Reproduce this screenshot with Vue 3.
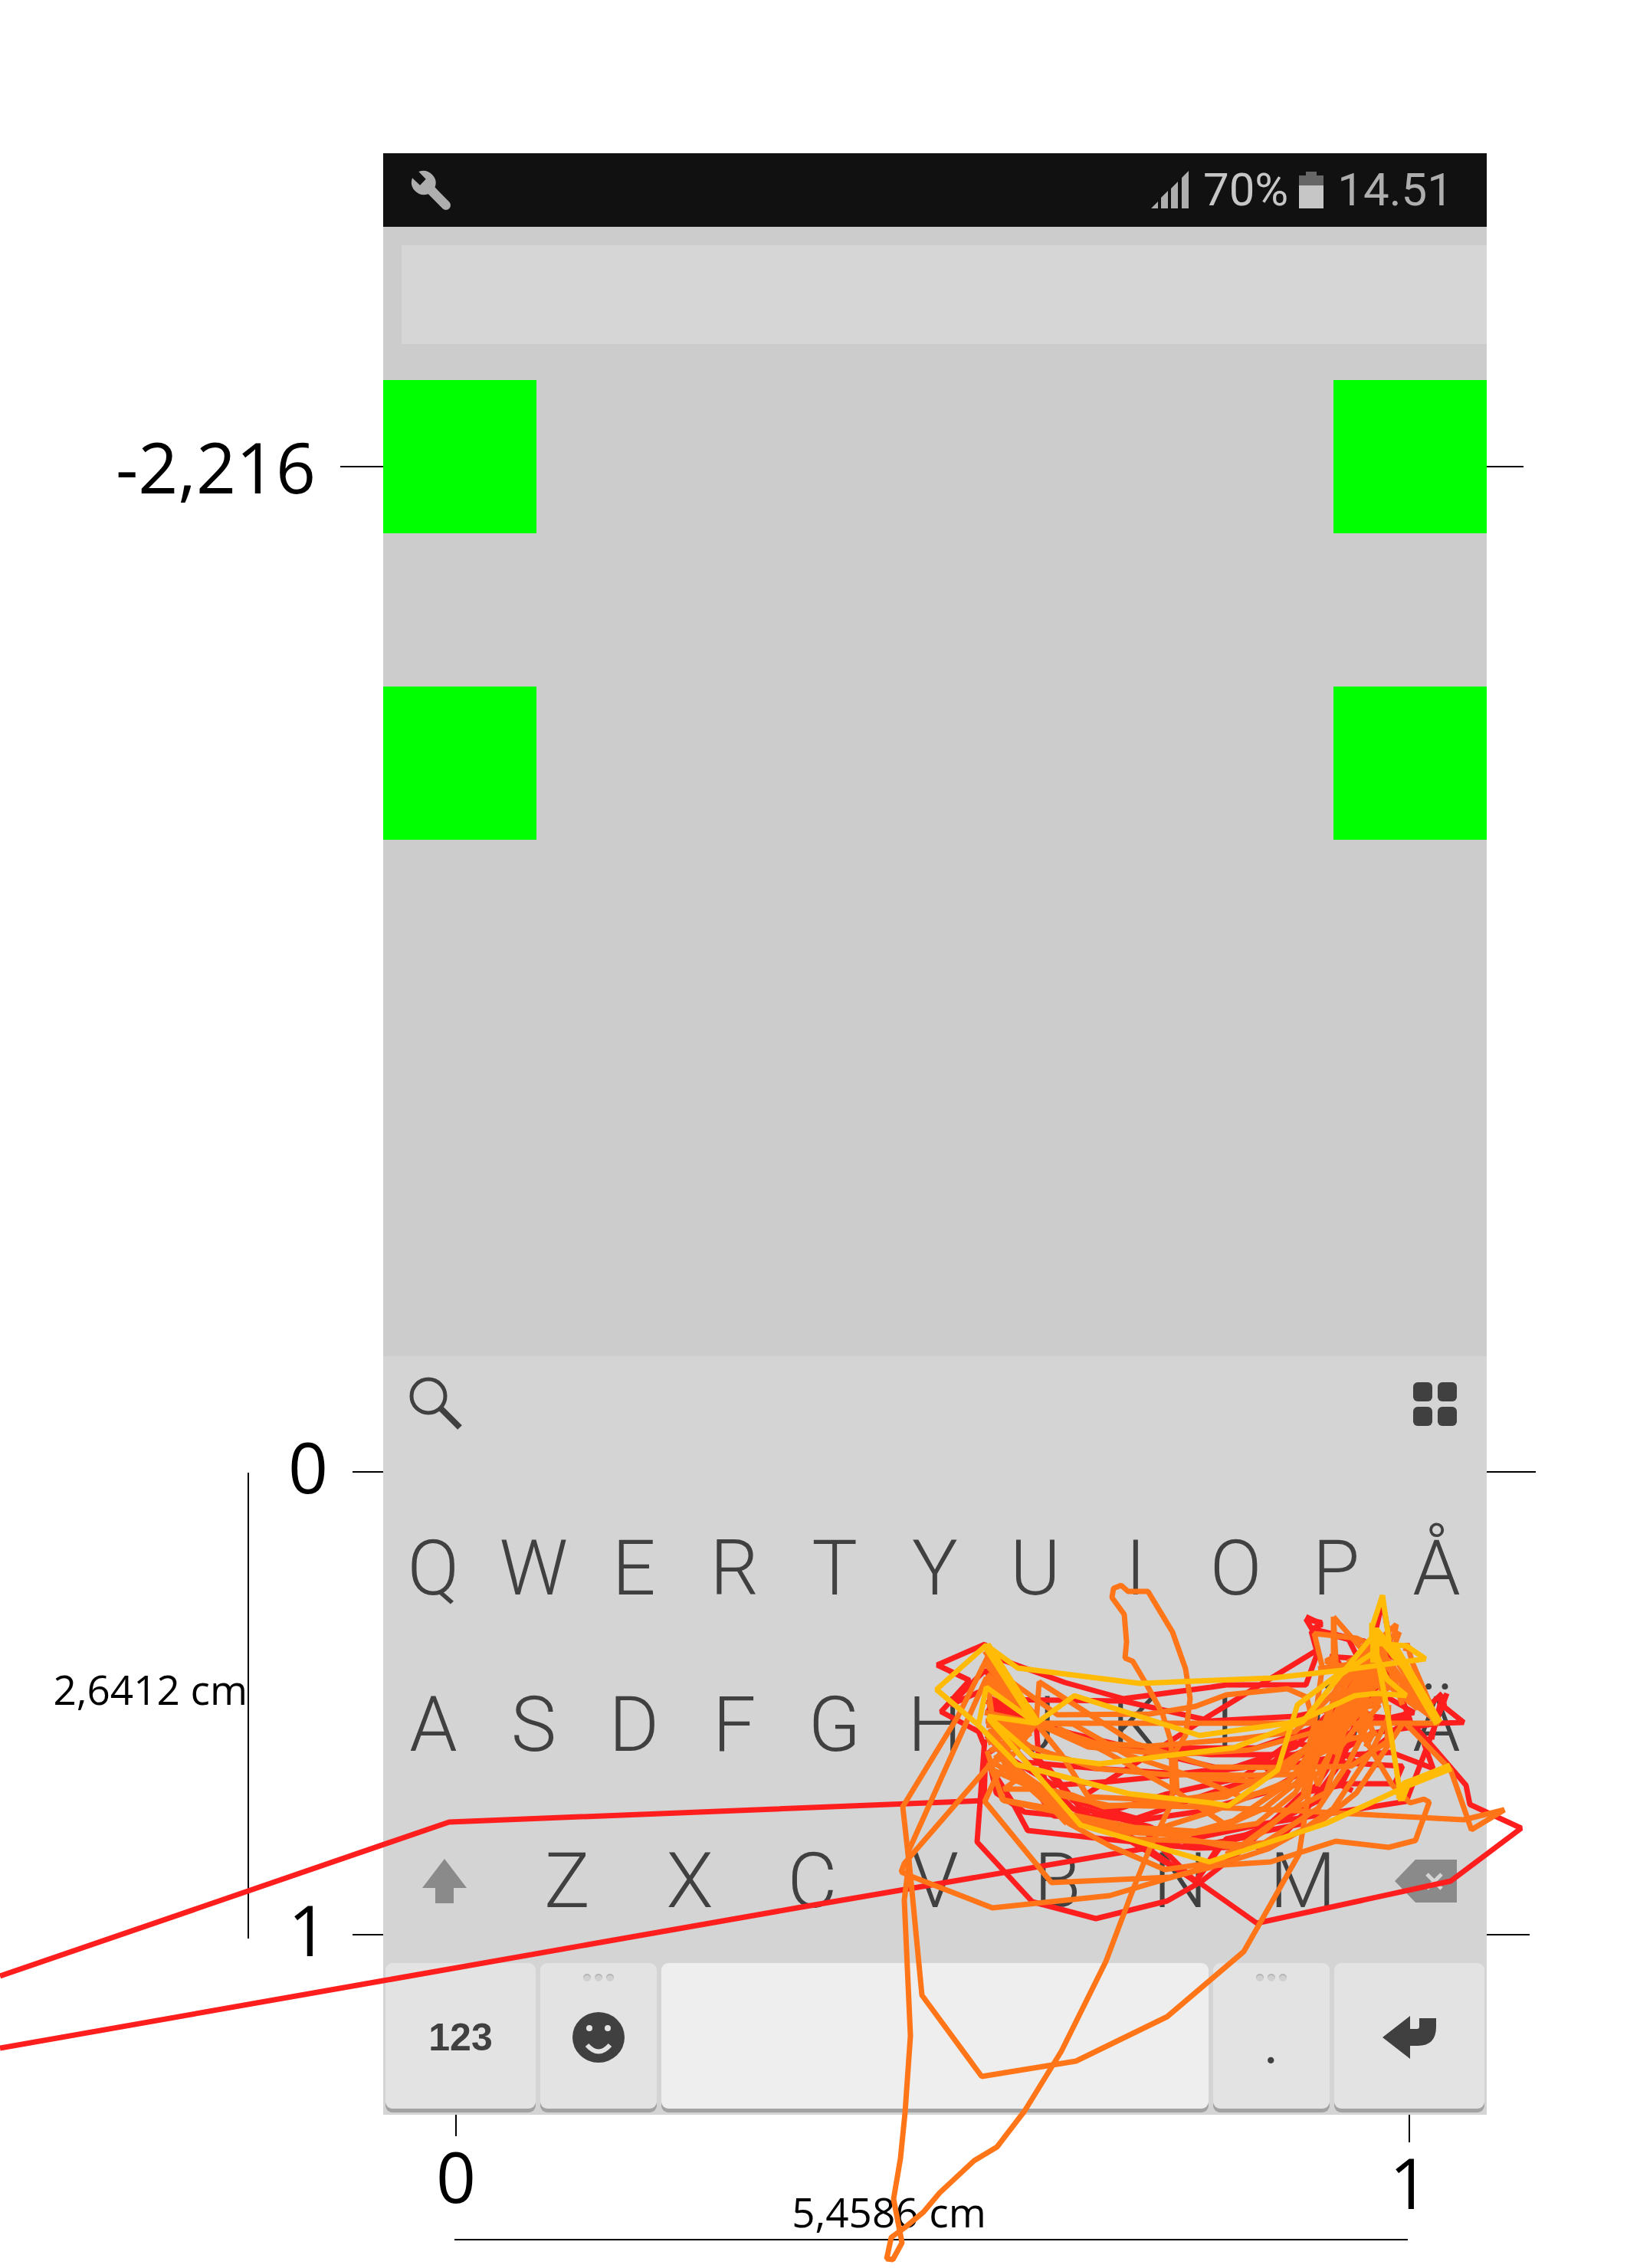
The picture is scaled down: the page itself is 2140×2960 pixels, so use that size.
<script setup>
const topRow = ['Q', 'W', 'E', 'R', 'T', 'Y', 'U', 'I', 'O', 'P', 'Å']
const homeRow = ['A', 'S', 'D', 'F', 'G', 'H', 'J', 'K', 'L', 'Ö', 'Ä']
const lowerRow = ['Z', 'X', 'C', 'V', 'B', 'N', 'M']

// Finger paths, one polyline each, in screen coordinates.
const redTraces = [
  '0,2579 586,2378 1284,2350 1286,2290 1352,2249',
  '0,2673 500,2585 1040,2490 1497,2412 1650,2380 1835,2351 1862,2280 1888,2210',
  '1352,2249 1285,2146 1223,2173 1265,2193 1228,2234 1277,2260 1285,2280',
  '1285,2270 1275,2404 1347,2482 1430,2504 1523,2481 1567,2456 1620,2415 1700,2340 1760,2328 1820,2328 1830,2305 1740,2300',
  '1352,2249 1355,2290 1364,2325 1400,2360 1470,2400 1565,2457 1640,2510 1893,2455 1985,2386 1918,2355 1913,2330 1870,2280 1830,2235',
  '1290,2160 1390,2196 1466,2217 1580,2202 1600,2199 1704,2199 1720,2155 1713,2128 1704,2113 1725,2118',
  '1352,2249 1300,2218 1466,2220 1580,2246 1690,2240 1790,2220 1810,2150',
  '1285,2205 1240,2225 1285,2180 1352,2249 1440,2275 1580,2290 1690,2290 1760,2260',
  '1287,2220 1352,2249 1400,2263 1480,2282 1640,2281 1730,2250 1780,2180 1760,2140 1714,2127',
  '1287,2265 1340,2320 1375,2370 1480,2374 1580,2340 1700,2300 1764,2290 1815,2287 1870,2308 1858,2275',
  '1288,2300 1320,2350 1341,2389 1440,2400 1560,2412 1660,2410 1700,2368 1750,2300 1790,2200',
  '1290,2240 1370,2310 1410,2360 1500,2384 1560,2410 1640,2395 1718,2330 1770,2250 1800,2180',
  '1288,2230 1352,2295 1400,2350 1490,2375 1560,2365 1650,2340 1730,2296 1790,2262 1877,2249',
  '1420,2340 1500,2290 1577,2240 1718,2154 1711,2129 1780,2142 1830,2170 1866,2225 1882,2210',
  '1288,2285 1300,2340 1337,2365 1420,2373 1520,2342 1620,2320 1700,2262 1765,2225 1800,2200',
  '1352,2249 1430,2275 1520,2291 1600,2310 1690,2280 1740,2230 1760,2190 1740,2160',
  '1290,2245 1340,2300 1430,2308 1540,2315 1660,2300 1733,2275 1770,2300 1815,2265 1835,2240',
  '1310,2290 1375,2330 1450,2325 1580,2312 1680,2300 1720,2280 1690,2275 1650,2310',
  '1400,2360 1480,2400 1560,2456 1590,2410 1660,2380 1720,2350 1760,2310 1750,2330 1765,2337',
  '1480,2376 1560,2456 1600,2400 1700,2380',
  '1290,2215 1352,2249 1288,2228 1352,2249 1289,2238 1340,2245',
  '1735,2162 1778,2165 1810,2215 1845,2235 1800,2245 1750,2252',
  '1704,2110 1725,2120 1712,2126 1780,2142 1825,2205 1840,2245 1790,2240 1750,2215 1770,2190',
  '1790,2150 1804,2090 1816,2155 1877,2249 1910,2248 1885,2228 1882,2212 1868,2270',
]

const orangeTraces = [
  '1352,2249 1290,2160 1250,2240 1178,2358 1186,2430 1180,2480 1188,2657 1181,2757 1175,2817 1166,2870 1177,2927 1165,2949 1157,2948 1163,2920 1181,2907 1205,2887 1226,2862 1271,2820 1301,2802 1337,2755 1385,2677 1443,2560 1480,2462 1500,2413 1527,2357 1530,2340 1528,2273 1517,2237 1497,2200 1478,2168 1468,2164 1470,2143 1467,2107 1451,2085 1453,2073 1463,2069 1472,2077 1498,2077 1530,2130 1547,2178 1553,2217 1547,2265 1533,2287 1536,2340',
  '1352,2249 1287,2190 1185,2417 1188,2447 1203,2604 1281,2710 1404,2690 1523,2632 1623,2547 1695,2420 1707,2343 1717,2280 1735,2230 1790,2150',
  '1352,2249 1290,2305 1180,2432 1176,2443 1187,2448 1295,2490 1448,2474 1580,2435 1658,2430 1743,2403 1812,2411 1847,2402 1865,2352 1858,2348 1840,2353 1817,2330 1775,2260 1790,2140',
  '1352,2249 1298,2323 1285,2351 1372,2457 1527,2450 1580,2437 1655,2413 1700,2388 1740,2360 1790,2285 1812,2240 1790,2160',
  '1835,2250 1893,2310 1920,2388 1963,2362 1910,2375 1760,2367 1687,2363 1560,2358 1445,2356 1370,2340 1300,2290',
  '1287,2165 1352,2249 1877,2249 1843,2170 1836,2145 1834,2155',
  '1352,2249 1356,2195 1410,2230 1480,2275 1580,2306 1680,2307 1763,2305 1810,2273 1812,2225',
  '1352,2249 1285,2170 1380,2238 1500,2237 1560,2227 1600,2212 1680,2204 1705,2215 1720,2275 1700,2340',
  '1290,2205 1352,2249 1430,2275 1500,2279 1620,2269 1690,2260 1740,2210 1797,2130 1877,2249',
  '1290,2260 1352,2249 1400,2250 1470,2290 1560,2320 1620,2345 1690,2330 1740,2250 1780,2180',
  '1285,2235 1352,2249 1420,2280 1530,2290 1630,2284 1710,2262 1760,2230 1800,2170',
  '1287,2270 1352,2249 1385,2290 1420,2345 1530,2350 1600,2340 1680,2310 1740,2240 1795,2150',
  '1290,2300 1310,2350 1380,2365 1480,2385 1560,2390 1610,2376 1680,2328 1730,2260 1790,2200',
  '1288,2285 1308,2349 1370,2360 1450,2390 1540,2395 1640,2380 1690,2340 1735,2265 1780,2230',
  '1290,2220 1310,2300 1350,2330 1400,2378 1500,2390 1600,2410 1650,2405 1720,2360 1760,2300 1790,2240',
  '1288,2190 1300,2280 1345,2335 1395,2380 1450,2410 1520,2440 1590,2430 1680,2365 1730,2340 1750,2280',
  '1290,2265 1330,2310 1390,2375 1480,2400 1560,2403 1650,2410 1720,2380 1770,2340 1830,2250',
  '1290,2240 1345,2280 1430,2308 1520,2316 1640,2317 1720,2315 1740,2280 1775,2230 1815,2200',
  '1295,2310 1340,2330 1400,2343 1440,2358 1520,2352 1600,2345 1690,2295 1755,2235 1805,2180',
  '1380,2255 1440,2285 1530,2335 1600,2382 1650,2360 1700,2320 1740,2260 1770,2200',
  '1500,2390 1580,2365 1680,2325 1730,2280 1770,2240 1797,2190',
  '1560,2320 1640,2325 1700,2285 1760,2225 1790,2180',
  '1600,2420 1650,2390 1700,2345 1720,2290 1745,2200 1740,2110 1740,2163 1730,2168 1797,2200',
  '1285,2155 1352,2249 1287,2170 1352,2249 1288,2185 1352,2249 1288,2195 1352,2240 1290,2165 1345,2238 1292,2175 1340,2236 1290,2190',
  '1286,2246 1352,2249 1287,2252 1352,2249 1288,2262 1352,2249 1289,2275 1352,2249 1292,2285 1345,2262 1298,2295',
  '1290,2270 1320,2290 1295,2300 1330,2320 1310,2335 1350,2335 1325,2310 1400,2370 1340,2325 1392,2380',
  '1726,2178 1715,2132 1770,2138 1795,2150 1877,2249 1797,2130 1830,2225',
  '1740,2110 1775,2150 1800,2140 1822,2120 1818,2140 1826,2130 1815,2160',
  '1797,2130 1877,2249 1800,2165 1877,2249 1800,2180 1870,2243 1805,2190 1860,2235 1812,2200 1850,2230 1810,2165 1840,2205',
  '1720,2178 1776,2170 1800,2190 1760,2240 1740,2270 1760,2180 1790,2170 1700,2300 1760,2270 1797,2262',
  '1725,2180 1715,2250 1705,2290 1720,2330 1750,2250 1795,2200 1780,2150',
  '1733,2165 1750,2176 1800,2170 1770,2200 1792,2262 1782,2280',
  '1758,2170 1790,2150 1765,2180 1800,2160 1775,2190 1805,2175 1790,2205 1810,2190 1795,2225 1812,2210',
  '1735,2250 1720,2270 1745,2262 1730,2285 1755,2258 1742,2290 1780,2240 1765,2230 1800,2225 1770,2260',
]

const yellowTraces = [
  '1352,2249 1287,2147 1222,2205 1275,2250 1327,2303 1473,2341 1580,2353 1603,2357 1667,2310 1693,2225 1757,2177 1790,2137 1790,2118',
  '1287,2147 1328,2177 1487,2197 1560,2194 1660,2190 1750,2180 1860,2165 1835,2148 1800,2145',
  '1277,2250 1287,2202 1352,2249 1402,2213 1565,2265 1680,2249 1700,2244 1768,2213 1797,2210 1835,2213 1810,2192 1792,2150',
  '1352,2249 1289,2240 1348,2291 1435,2302 1610,2281 1700,2247 1750,2185 1795,2155',
  '1290,2243 1410,2382 1578,2430 1730,2380 1823,2337 1828,2350 1832,2327 1893,2306 1826,2334 1808,2220 1795,2150',
  '1790,2125 1804,2082 1813,2145 1877,2249',
]

const yellowBold = [
  '1287,2147 1352,2249',
  '1794,2124 1794,2170',
  '1794,2128 1834,2175 1877,2249 1818,2148',
  '1893,2306 1835,2329 1827,2349',
]
</script>

<template>
  <main class="figure">
    <aside class="gutter gutter-left">
      <div class="tick-row first">
        <span class="axis-label">-2,216</span><i class="tick long"></i>
      </div>
      <div class="tick-row second">
        <span class="axis-label">0</span><i class="tick"></i>
      </div>
      <div class="tick-row third">
        <span class="axis-label">1</span><i class="tick"></i>
      </div>
      <div class="height-measure">2,6412 cm</div>
    </aside>

    <section class="phone">
      <header class="status">
        <svg class="wrench" width="52" height="52" viewBox="0 0 52 52">
          <path fill="#aeaeae" d="M10.3 2 A16.3 16.3 0 0 1 31.6 22.6 L50.2 41.6 A6 6 0 0 1 41.6 50.2 L22.8 31.2 A16.3 16.3 0 0 1 2 10.2 L12 19.7 L19.7 11.7 Z" />
        </svg>
        <span class="spacer"></span>
        <svg class="signal" width="50" height="50" viewBox="0 0 50 50">
          <path fill="#aeaeae" d="M0 49 L9 40 V49Z M13 49 V35 L22 26 V49Z M26 49 V23 L35 14 V49Z M40 49 V9 L49 0 V49Z" />
        </svg>
        <span class="percent">70%</span>
        <svg class="battery" width="32" height="48" viewBox="0 0 32 48">
          <path fill="#666" d="M0 5 H9 V0 H23 V5 H32 V18 H0Z" />
          <path fill="#c6c6c6" d="M0 18 H32 V48 H0Z" />
        </svg>
        <time>14.51</time>
      </header>

      <div class="field">
        <input type="text" aria-label="Text entry" />
      </div>

      <div class="targets"><i></i><i></i></div>
      <div class="targets lower"><i></i><i></i></div>

      <div class="keyboard">
        <div class="tools">
          <button type="button" aria-label="Search">
            <svg width="70" height="70" viewBox="0 0 70 70" fill="none" stroke="#404040">
              <circle cx="25" cy="25" r="22" stroke-width="5" />
              <path d="M41 41 L66 66" stroke-width="8" />
            </svg>
          </button>
          <button type="button" aria-label="Layouts">
            <svg width="57" height="57" viewBox="0 0 57 57" fill="#404040">
              <rect width="25" height="25" rx="6" />
              <rect x="32" width="25" height="25" rx="6" />
              <rect y="32" width="25" height="25" rx="6" />
              <rect x="32" y="32" width="25" height="25" rx="6" />
            </svg>
          </button>
        </div>

        <div class="letters">
          <button v-for="k in topRow" :key="k" type="button">{{ k }}</button>
        </div>
        <div class="letters">
          <button v-for="k in homeRow" :key="k" type="button">{{ k }}</button>
        </div>
        <div class="letters">
          <button type="button" aria-label="Shift">
            <svg width="58" height="58" viewBox="0 0 58 58">
              <path fill="#8a8a8a" d="M29 0 L58 38 H41 V58 H17 V38 H0Z" />
            </svg>
          </button>
          <button v-for="k in lowerRow" :key="k" type="button">{{ k }}</button>
          <button type="button" aria-label="Backspace">
            <svg width="81" height="56" viewBox="0 0 81 56">
              <path fill="#8a8a8a" d="M0 28 L27 0 H81 V56 H27Z" />
              <path d="M42 19 L61 38 M61 19 L42 38" stroke="#d5d5d5" stroke-width="5" />
            </svg>
          </button>
        </div>

        <div class="bottom-keys">
          <button type="button" class="numeric">123</button>
          <button type="button" aria-label="Emoji">
            <span class="dots"><i></i><i></i><i></i></span>
            <svg width="68" height="66" viewBox="0 0 68 66">
              <ellipse cx="34" cy="33" rx="34" ry="33" fill="#404040" />
              <circle cx="22" cy="21" r="4" fill="#e3e3e3" />
              <circle cx="46" cy="21" r="4" fill="#e3e3e3" />
              <path d="M19 43 Q34 60 49 43" fill="none" stroke="#e3e3e3" stroke-width="6" />
            </svg>
          </button>
          <button type="button" class="space" aria-label="Space"></button>
          <button type="button">
            <span class="dots"><i></i><i></i><i></i></span>.
          </button>
          <button type="button" aria-label="Enter">
            <svg width="70" height="56" viewBox="0 0 70 56">
              <path fill="#404040" d="M0 28 L36 0 V17 H45 Q48 17 48 14 V3 H70 V14 Q70 39 46 39 H36 V56Z" />
            </svg>
          </button>
        </div>
      </div>
    </section>

    <aside class="gutter gutter-right">
      <div class="tick-row first"><i class="tick"></i></div>
      <div class="tick-row second"><i class="tick long"></i></div>
      <div class="tick-row third"><i class="tick mid"></i></div>
    </aside>

    <footer class="x-axis">
      <div class="x-marks">
        <div class="x-mark"><i></i><span class="axis-label">0</span></div>
        <div class="x-mark end"><i></i><span class="axis-label">1</span></div>
      </div>
      <div class="width-measure">5,4586 cm</div>
    </footer>

    <svg class="traces" viewBox="0 0 2140 2960" preserveAspectRatio="none" aria-hidden="true">
      <g stroke="#ff1e1e"><polyline v-for="p in redTraces" :key="p" :points="p" /></g>
      <g stroke="#ff7517"><polyline v-for="p in orangeTraces" :key="p" :points="p" /></g>
      <g stroke="#ffbb05"><polyline v-for="p in yellowTraces" :key="p" :points="p" /></g>
      <g stroke="#ffbb05" class="bold"><polyline v-for="p in yellowBold" :key="p" :points="p" /></g>
    </svg>
  </main>
</template>

<style>
body {
  margin: 0;
  background: #fff;
}
</style>

<style scoped>
.figure {
  position: relative;
  display: grid;
  grid-template-columns: 500fr 1440fr 200fr;
  padding-top: 200px;
  overflow: hidden;
  font-family: "Open Sans", "Noto Sans", sans-serif;
  color: #000;
}

/* axis gutters */
.gutter {
  display: grid;
  grid-template-rows: 359px 100px 1212px 100px 504px 100px 1fr;
}
.gutter-left {
  grid-template-columns: 325fr 175fr;
}
.tick-row {
  grid-column: 1 / -1;
  display: flex;
  align-items: center;
}
.gutter-left .tick-row {
  justify-content: flex-end;
  gap: 32px;
}
.first { grid-row: 2; }
.second { grid-row: 4; }
.third { grid-row: 6; }
.axis-label {
  font-size: 91px;
  line-height: 92px;
}
.second .axis-label,
.third .axis-label {
  padding-bottom: 14px;
}
.tick {
  width: 40px;
  height: 2px;
  background: #000;
}
.tick.long { width: 56px; }
.gutter-right .tick { width: 48px; }
.gutter-right .tick.mid { width: 56px; }
.gutter-right .tick.long { width: 64px; }
.height-measure {
  grid-column: 1;
  grid-row: 4 / 7;
  box-sizing: border-box;
  height: 608px;
  margin-top: 51px;
  padding-bottom: 42px;
  border-right: 2px solid #000;
  display: flex;
  align-items: center;
  justify-content: flex-end;
  font-size: 53px;
  line-height: 54px;
  white-space: nowrap;
}

/* phone */
.phone {
  background: #ccc;
}
.status {
  display: flex;
  align-items: center;
  height: 96px;
  padding: 0 44px 0 36px;
  background: #111;
  font-family: Roboto, sans-serif;
  font-size: 60px;
  line-height: 62px;
  color: #aeaeae;
}
.spacer { flex: 1; }
.signal { margin-right: 18px; }
.percent { color: #c6c6c6; }
.battery { margin: 0 18px 0 14px; }
.field {
  padding: 24px 0 0 24px;
}
.field input {
  display: block;
  box-sizing: border-box;
  width: 100%;
  height: 129px;
  border: 0;
  padding: 0 24px;
  background: #d6d6d6;
  font: 60px Roboto, sans-serif;
}
.targets {
  display: flex;
  justify-content: space-between;
  margin-top: 47px;
}
.targets i {
  width: 200px;
  height: 200px;
  background: #0f0;
}
.targets.lower {
  margin: 200px 0 674px;
}

/* keyboard */
.keyboard {
  background: #d4d4d4;
}
.keyboard button {
  position: relative;
  display: flex;
  align-items: center;
  justify-content: center;
  padding: 0;
  border: 0;
  background: none;
  font: 300 100px/100px Roboto, sans-serif;
  color: #404040;
}
.tools {
  display: flex;
  align-items: center;
  justify-content: space-between;
  height: 124px;
  padding: 0 39px 0 34px;
  margin-bottom: 51px;
}
.letters {
  display: flex;
  height: 204px;
}
.letters button {
  flex: 1 1 0;
}
.bottom-keys {
  display: grid;
  grid-template-columns: 196fr 152fr 714fr 152fr 196fr;
  gap: 6px;
  padding: 5px 3px 8px;
}
.bottom-keys button {
  box-sizing: border-box;
  height: 190px;
  padding-top: 4px;
  border-radius: 9px;
  background: #e3e3e3;
  box-shadow: 0 5px 0 #a2a2a2;
}
.bottom-keys .space {
  background: #eee;
}
.bottom-keys .numeric {
  font: bold 50px/50px "Liberation Sans", Arial, sans-serif;
}
.dots {
  position: absolute;
  top: 14px;
  left: 0;
  right: 0;
  display: flex;
  justify-content: center;
  gap: 5px;
}
.dots i {
  width: 10px;
  height: 10px;
  border-radius: 50%;
  background: #d0d0d0;
  box-shadow: inset 0 2px 0 #b4b4b4;
}

/* horizontal axis */
.x-axis {
  grid-column: 2;
  display: grid;
  height: 200px;
}
.x-marks {
  grid-area: 1 / 1;
  display: flex;
  justify-content: space-between;
  padding: 0 75px 0 69px;
}
.x-mark {
  display: flex;
  flex-direction: column;
  align-items: center;
  gap: 6px;
}
.x-mark i {
  width: 2px;
  height: 28px;
  background: #000;
}
.x-mark.end i { height: 36px; }
.width-measure {
  grid-area: 1 / 1;
  box-sizing: border-box;
  height: 164px;
  margin: 0 103px 0 93px;
  padding: 0 110px 8px 0;
  border-bottom: 2px solid #000;
  display: flex;
  align-items: flex-end;
  justify-content: center;
  font-size: 53px;
  line-height: 54px;
}

.traces {
  position: absolute;
  inset: 0;
  width: 100%;
  height: 100%;
  pointer-events: none;
  fill: none;
  stroke-width: 7;
  stroke-linejoin: bevel;
}
.bold { stroke-width: 12; }
</style>
